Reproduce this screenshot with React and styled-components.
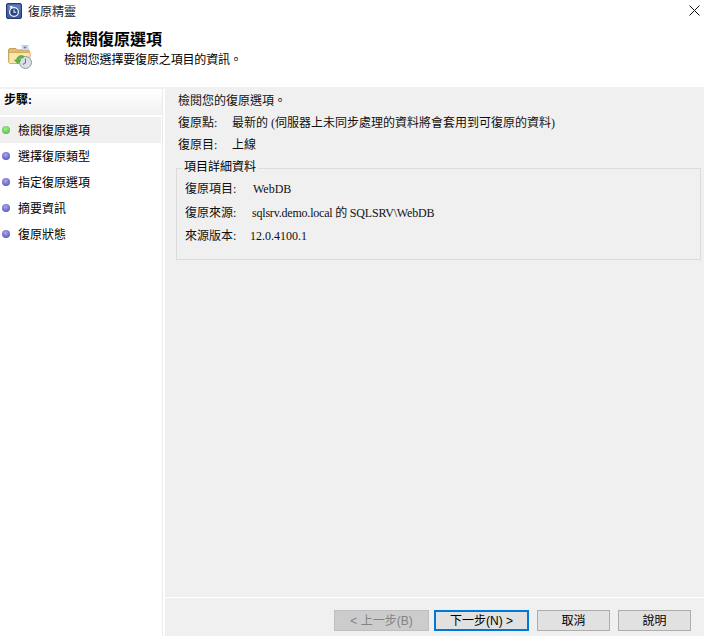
import React from "react";
import styled, { createGlobalStyle } from "styled-components";

const Global = createGlobalStyle`
  html, body { margin: 0; padding: 0; background: #fff; }
  body { font-family: "Liberation Serif", "Noto Sans CJK TC", serif; font-size: 12px; color: #000; }
`;
const Win = styled.div`
  width: 704px; height: 636px; display: flex; flex-direction: column; overflow: hidden; background: #fff;
`;
const TitleBar = styled.div`
  height: 21px; display: flex; align-items: center; padding: 1px 0 0 6px; gap: 6px; flex: none; position: relative;
  font-size: 12px; color: #222; box-sizing: border-box;
`;
const CloseBtn = styled.div`
  position: absolute; right: 2px; top: 4px; width: 16px; height: 13px; display: flex; align-items: center; justify-content: center;
`;
const Header = styled.div`
  height: 66px; flex: none; display: flex; border-bottom: 2px solid #f0f0f0; box-sizing: content-box;
`;
const HeaderIcon = styled.div`
  width: 64px; flex: none; padding: 24px 0 0 8px; box-sizing: border-box;
`;
const HeaderText = styled.div`
  display: flex; flex-direction: column; padding-top: 9px;
`;
const Heading = styled.div`
  font-size: 16px; font-weight: 700; line-height: 19px; padding-left: 2px;
`;
const Sub = styled.div`
  font-size: 12px; line-height: 17px; margin-top: 3px; letter-spacing: -0.15px;
`;
const Body = styled.div`
  flex: 1; display: flex; min-height: 0;
`;
const Sidebar = styled.div`
  width: 162px; flex: none; border-right: 1px solid #eaeaea; padding-top: 1px; box-sizing: content-box;
`;
const StepsTitle = styled.div`
  height: 25px; padding-left: 4px; font-weight: 700; line-height: 21px;
  background: linear-gradient(#ffffff, #f1f1f1); margin-bottom: 2px;
`;
const Step = styled.div`
  height: 26px; display: flex; align-items: center; gap: 8px; padding-left: 2px;
  background: ${p => (p.$active ? "#f0f0f0" : "transparent")}; width: 161px; font-size: 12px; box-sizing: border-box;
`;
const Dot = styled.span`
  width: 8px; height: 8px; border-radius: 50%; flex: none;
  background: radial-gradient(circle at 45% 35%, ${p => (p.$active ? "#a6ee8e, #3fb030" : "#a9a9f0, #4444ac")});
`;
const Main = styled.div`
  flex: 1; margin-left: 2px; display: flex; flex-direction: column; min-width: 0;
`;
const Content = styled.div`
  flex: 1; background: #f0f0f0; padding: 5px 3px 0 13px; min-height: 0;
`;
const Line = styled.div`
  height: 22px; display: flex; align-items: flex-start; line-height: 14px; white-space: pre; font-size: 12px; color: #111;
`;
const GroupLine = styled(Line)`
  height: 23.5px;
`;
const Label = styled.span`
  width: ${p => p.$w}px; flex: none;
`;
const Tight = styled.span`
  letter-spacing: -0.2px;
`;
const Group = styled.fieldset`
  margin: 8px 0 0 -2px; padding: 13px 8px 0 8px; border: 1px solid #dcdcdc; height: 92px; box-sizing: border-box; position: relative;
`;
const GroupTitle = styled.span`
  position: absolute; left: 5px; top: -9px; background: #f0f0f0; padding: 0 2px; font-size: 12px; line-height: 15px;
`;
const Footer = styled.div`
  height: 26px; flex: none; border-top: 1px solid #fff; background: #f0f0f0; display: flex; justify-content: flex-end;
  align-items: flex-start; padding: 12px 13px 0 0; box-sizing: content-box;
`;
const Btn = styled.button`
  width: ${p => p.$w}px; height: 21px; box-sizing: border-box; font-size: 12px; line-height: 1; padding: 0;
  margin: 0 0 0 ${p => p.$gap || 0}px;
  background: ${p => (p.$disabled ? "#cccccc" : "#e1e1e1")};
  color: ${p => (p.$disabled ? "#838383" : "#000")};
  border: ${p => (p.$primary ? "2px solid #0078d7" : p.$disabled ? "1px solid #bfbfbf" : "1px solid #adadad")};
  font-family: "Liberation Sans", "Noto Sans CJK TC", sans-serif;
`;

const AppIcon = () => (
  <svg width="16" height="16" viewBox="0 0 16 16">
    <rect x="0.5" y="0.5" width="15" height="15" rx="1.5" fill="#3b5ea8" stroke="#26386e" />
    <rect x="1.5" y="1.5" width="13" height="6" fill="#7f97cf" opacity="0.5" />
    <circle cx="8" cy="9" r="4.4" fill="#2b447f" stroke="#f0f4fc" strokeWidth="1.3" />
    <path d="M8 6.5V9.3H10.2" fill="none" stroke="#f0f4fc" strokeWidth="1.1" />
    <path d="M3.5 3L7.2 3.3L5 6Z" fill="#f0f4fc" />
  </svg>
);
const FolderIcon = () => (
  <svg width="24" height="24" viewBox="0 0 24 24">
    <path d="M0.5 5C0.5 4 1.2 3.5 2 3.5H8L9.5 5H20C21 5 21.5 5.7 21.5 6.5V17H2C1.1 17 0.5 16.4 0.5 15.5Z" fill="#e6bc6a" stroke="#b6904a" strokeWidth="0.8" />
    <path d="M0.8 8.5C0.8 7.8 1.3 7.5 2 7.5H21.5C22.3 7.5 22.7 8 22.5 8.8L21 18.5H2.2C1.4 18.5 0.8 18 0.8 17.4Z" fill="#fbe7a9" stroke="#c8a35a" strokeWidth="0.8" />
    <rect x="14" y="0.5" width="6" height="4.5" fill="#eef3fa" stroke="#a7b4c7" strokeWidth="0.6" />
    <rect x="15.5" y="1.5" width="3" height="2" fill="#4d86d4" />
    <circle cx="17.5" cy="17.5" r="6" fill="#dbe1e9" stroke="#8c97a5" strokeWidth="1" />
    <path d="M17.5 13.5V17.8L14.8 19.5" fill="none" stroke="#707a88" strokeWidth="1.1" />
    <path d="M8.5 15C9 11.2 12.4 9.4 16 11.2L14.6 13.2C12.8 12.2 11.2 13.2 11 15H12.8L9.7 18.8L6.5 15Z" fill="#5db645" stroke="#3d8e2c" strokeWidth="0.5" />
  </svg>
);
const CloseIcon = () => (
  <svg width="11" height="11" viewBox="0 0 11 11">
    <path d="M0.5 0.5L10.5 10.5M10.5 0.5L0.5 10.5" stroke="#111" strokeWidth="1" fill="none" />
  </svg>
);

const steps = ["檢閱復原選項", "選擇復原類型", "指定復原選項", "摘要資訊", "復原狀態"];

export default function App() {
  return (
    <Win>
      <Global />
      <TitleBar>
        <AppIcon />
        <span>復原精靈</span>
        <CloseBtn><CloseIcon /></CloseBtn>
      </TitleBar>
      <Header>
        <HeaderIcon><FolderIcon /></HeaderIcon>
        <HeaderText>
          <Heading>檢閱復原選項</Heading>
          <Sub>檢閱您選擇要復原之項目的資訊。</Sub>
        </HeaderText>
      </Header>
      <Body>
        <Sidebar>
          <StepsTitle>步驟:</StepsTitle>
          {steps.map((s, i) => (
            <Step key={s} $active={i === 0}>
              <Dot $active={i === 0} />
              <span>{s}</span>
            </Step>
          ))}
        </Sidebar>
        <Main>
          <Content>
            <Line>檢閱您的復原選項。</Line>
            <Line><Label $w={54}>復原點:</Label>最新的 (伺服器上未同步處理的資料將會套用到可復原的資料)</Line>
            <Line><Label $w={54}>復原目:</Label>上線</Line>
            <Group>
              <GroupTitle>項目詳細資料</GroupTitle>
              <GroupLine><Label $w={68}>復原項目:</Label>WebDB</GroupLine>
              <GroupLine><Label $w={67}>復原來源:</Label><Tight>sqlsrv.demo.local 的 SQLSRV\WebDB</Tight></GroupLine>
              <GroupLine><Label $w={65}>來源版本:</Label>12.0.4100.1</GroupLine>
            </Group>
          </Content>
          <Footer>
            <Btn $w={95} $disabled>&lt; 上一步(B)</Btn>
            <Btn $w={95} $gap={5} $primary>下一步(N) &gt;</Btn>
            <Btn $w={73} $gap={8}>取消</Btn>
            <Btn $w={73} $gap={8}>說明</Btn>
          </Footer>
        </Main>
      </Body>
    </Win>
  );
}
